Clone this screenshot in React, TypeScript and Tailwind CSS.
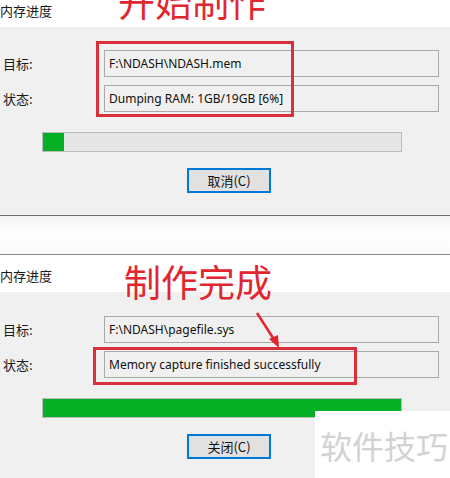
import React from "react";

const CJK = "font-['Microsoft_YaHei','Noto_Sans_CJK_SC',sans-serif]";
const UI = "font-['Noto_Sans','Noto_Sans_CJK_SC',sans-serif]";

function Field({ label, value }: { label: string; value: string }) {
  return (
    <div className="flex items-center">
      <div className={`w-[104px] pl-[3px] text-[13px] text-[#1a1a1a] ${CJK}`}>{label}</div>
      <div
        className={`w-[335px] h-[27px] border border-[#a9a9a9] bg-[#f0f0f0] flex items-center pl-[4px] text-[12px] text-[#111] ${UI}`}
      >
        {value}
      </div>
    </div>
  );
}

function Dialog({
  titleBar,
  titlePad,
  target,
  status,
  progress,
  button,
  bodyPad,
}: {
  titleBar: string;
  titlePad: string;
  target: string;
  status: string;
  progress: number;
  button: string;
  bodyPad: string;
}) {
  return (
    <div className="flex flex-col">
      <div className={`${titleBar} bg-white ${titlePad} text-[13px] text-[#1a1a1a] ${CJK}`}>内存进度</div>
      <div className={`bg-[#f0f0f0] ${bodyPad} flex flex-col`}>
        <div className="flex flex-col gap-[8px]">
          <Field label="目标:" value={target} />
          <Field label="状态:" value={status} />
        </div>
        <div className="ml-[42px] mt-[20px] w-[360px] h-[20px] border border-[#bcbcbc] bg-[#e6e6e6]">
          <div className="h-full bg-[#06b025]" style={{ width: `${progress}%` }} />
        </div>
        <div
          className={`ml-[187px] mt-[16px] w-[84px] h-[25px] border-2 border-[#0078d7] bg-[#e1e1e1] flex items-center justify-center text-[13px] text-[#111] ${CJK}`}
        >
          {button}
        </div>
      </div>
    </div>
  );
}

export default function App() {
  return (
    <div className="relative w-[450px] h-[478px] overflow-hidden bg-white">
      <Dialog
        titleBar="h-[27px]"
        titlePad="pt-[1px]"
        target="F:\NDASH\NDASH.mem"
        status="Dumping RAM: 1GB/19GB [6%]"
        progress={6}
        button="取消(C)"
        bodyPad="pt-[23px] h-[189px] border-b border-[#707070]"
      />
      <div className="h-[38px] bg-gradient-to-b from-[#f4f4f4] via-white to-[#fafafa]" />
      <div className="border-t border-[#8a8a8a]">
        <Dialog
          titleBar="h-[37px]"
          titlePad="pt-[11px]"
          target="F:\NDASH\pagefile.sys"
          status="Memory capture finished successfully"
          progress={100}
          button="关闭(C)"
          bodyPad="pt-[24px] h-[190px]"
        />
      </div>

      {/* annotations */}
      <div className={`absolute left-[118px] top-[-17px] text-[37px] leading-none text-[#e2262f] ${CJK}`}>开始制作</div>
      <div className="absolute left-[96px] top-[41px] w-[198px] h-[76px] border-[3px] border-[#d8303a]" />
      <div className={`absolute left-[124px] top-[263px] text-[37px] leading-none text-[#e2262f] ${CJK}`}>制作完成</div>
      <svg className="absolute left-[250px] top-[308px]" width="40" height="44" viewBox="0 0 40 44">
        <line x1="7" y1="5" x2="25" y2="33" stroke="#e0262f" strokeWidth="2.5" />
        <polygon points="29,40 19,31 28,27" fill="#e0262f" />
      </svg>
      <div className="absolute left-[93px] top-[347px] w-[264px] h-[38px] border-[3px] border-[#d8303a]" />

      {/* watermark */}
      <div className="absolute left-[315px] top-[411px] w-[135px] h-[67px] bg-white flex items-center pl-[5px]">
        <span className={`text-[32px] leading-none text-[#d2d2d2] ${CJK}`}>软件技巧</span>
      </div>
    </div>
  );
}
